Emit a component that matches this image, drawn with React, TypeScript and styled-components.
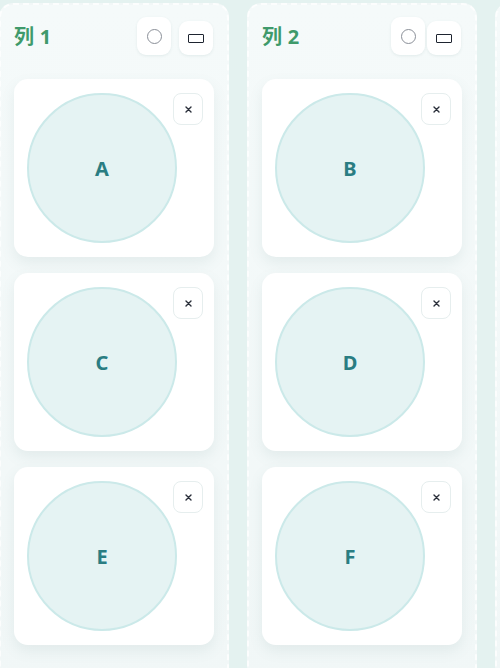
import React from "react";
import styled, { createGlobalStyle } from "styled-components";

const Global = createGlobalStyle`
  html, body { margin: 0; padding: 0; }
  body {
    background: #e4f2f0;
    font-family: "Noto Sans", "Noto Sans CJK SC", sans-serif;
    overflow: hidden;
  }
`;

const Board = styled.div`
  display: flex;
  gap: 18px;
  padding: 3px 0 0 0;
  margin-left: -1px;
  align-items: flex-start;
`;

const Column = styled.section`
  flex: 0 0 230px;
  box-sizing: border-box;
  min-height: 700px;
  border: 2px dashed rgba(255, 255, 255, 0.75);
  border-radius: 14px;
  background: linear-gradient(180deg, #f5fafa 0%, #f1f7f7 100%);
  padding: 0 13px;
  display: flex;
  flex-direction: column;
`;

const Header = styled.header`
  display: flex;
  align-items: flex-end;
  height: 50px;
  margin-bottom: 24px;
`;

const Title = styled.h2`
  margin: 0 auto 5px 0;
  font-size: 20px;
  font-weight: 700;
  color: #3f9a6b;
  line-height: 26px;
  letter-spacing: 0.3px;
`;

const Tools = styled.div<{ $gap: number }>`
  display: flex;
  align-items: flex-end;
  gap: ${(p) => p.$gap}px;
  margin-right: 1px;
`;

const ToolButton = styled.button<{ $tall?: boolean }>`
  width: 34px;
  height: ${(p) => (p.$tall ? 38 : 34)}px;
  border: none;
  border-radius: 9px;
  background: #ffffff;
  box-shadow: 0 1px 3px rgba(60, 110, 110, 0.1);
  display: flex;
  align-items: center;
  justify-content: center;
  padding: 0;
  cursor: pointer;
`;

const CircleIcon = styled.span`
  width: 15px;
  height: 15px;
  border-radius: 50%;
  border: 1.3px solid #8a8f98;
  box-sizing: border-box;
`;

const RectIcon = styled.span`
  width: 16px;
  height: 9px;
  border: 1.6px solid #1e2430;
  box-sizing: border-box;
  border-radius: 1px;
`;

const CardList = styled.div`
  display: flex;
  flex-direction: column;
  gap: 16px;
`;

const Card = styled.div`
  position: relative;
  height: 178px;
  box-sizing: border-box;
  background: #ffffff;
  border-radius: 14px;
  box-shadow: 0 6px 14px rgba(90, 130, 130, 0.1);
  padding: 14px 0 14px 13px;
  display: flex;
  align-items: center;
`;

const Disc = styled.div`
  width: 150px;
  height: 150px;
  box-sizing: border-box;
  border-radius: 50%;
  background: #e5f3f3;
  border: 2px solid #cbe9e9;
  display: flex;
  align-items: center;
  justify-content: center;
  font-size: 20px;
  font-weight: 700;
  color: #2a7d82;
`;

const CloseButton = styled.button`
  position: absolute;
  top: 14px;
  right: 11px;
  width: 30px;
  height: 32px;
  border-radius: 8px;
  border: 1px solid #e6eeee;
  background: #ffffff;
  padding: 0;
  display: flex;
  align-items: center;
  justify-content: center;
  cursor: pointer;
`;

const columns = [
  { id: "c1", title: "列 1", items: ["A", "C", "E"], gap: 8 },
  { id: "c2", title: "列 2", items: ["B", "D", "F"], gap: 2 },
  { id: "c3", title: "", items: [], gap: 2 },
];

export default function App() {
  return (
    <>
      <Global />
      <Board>
        {columns.map((col) => (
          <Column key={col.id}>
            {col.title && (
              <Header>
                <Title>{col.title}</Title>
                <Tools $gap={col.gap}>
                  <ToolButton $tall aria-label="circle">
                    <CircleIcon />
                  </ToolButton>
                  <ToolButton aria-label="rect">
                    <RectIcon />
                  </ToolButton>
                </Tools>
              </Header>
            )}
            <CardList>
              {col.items.map((it) => (
                <Card key={it}>
                  <Disc>{it}</Disc>
                  <CloseButton aria-label="remove">
                    <svg width="7" height="7" viewBox="0 0 7 7">
                      <path d="M1 1L6 6M6 1L1 6" stroke="#2a2f3a" strokeWidth="1.4" strokeLinecap="round" />
                    </svg>
                  </CloseButton>
                </Card>
              ))}
            </CardList>
          </Column>
        ))}
      </Board>
    </>
  );
}
